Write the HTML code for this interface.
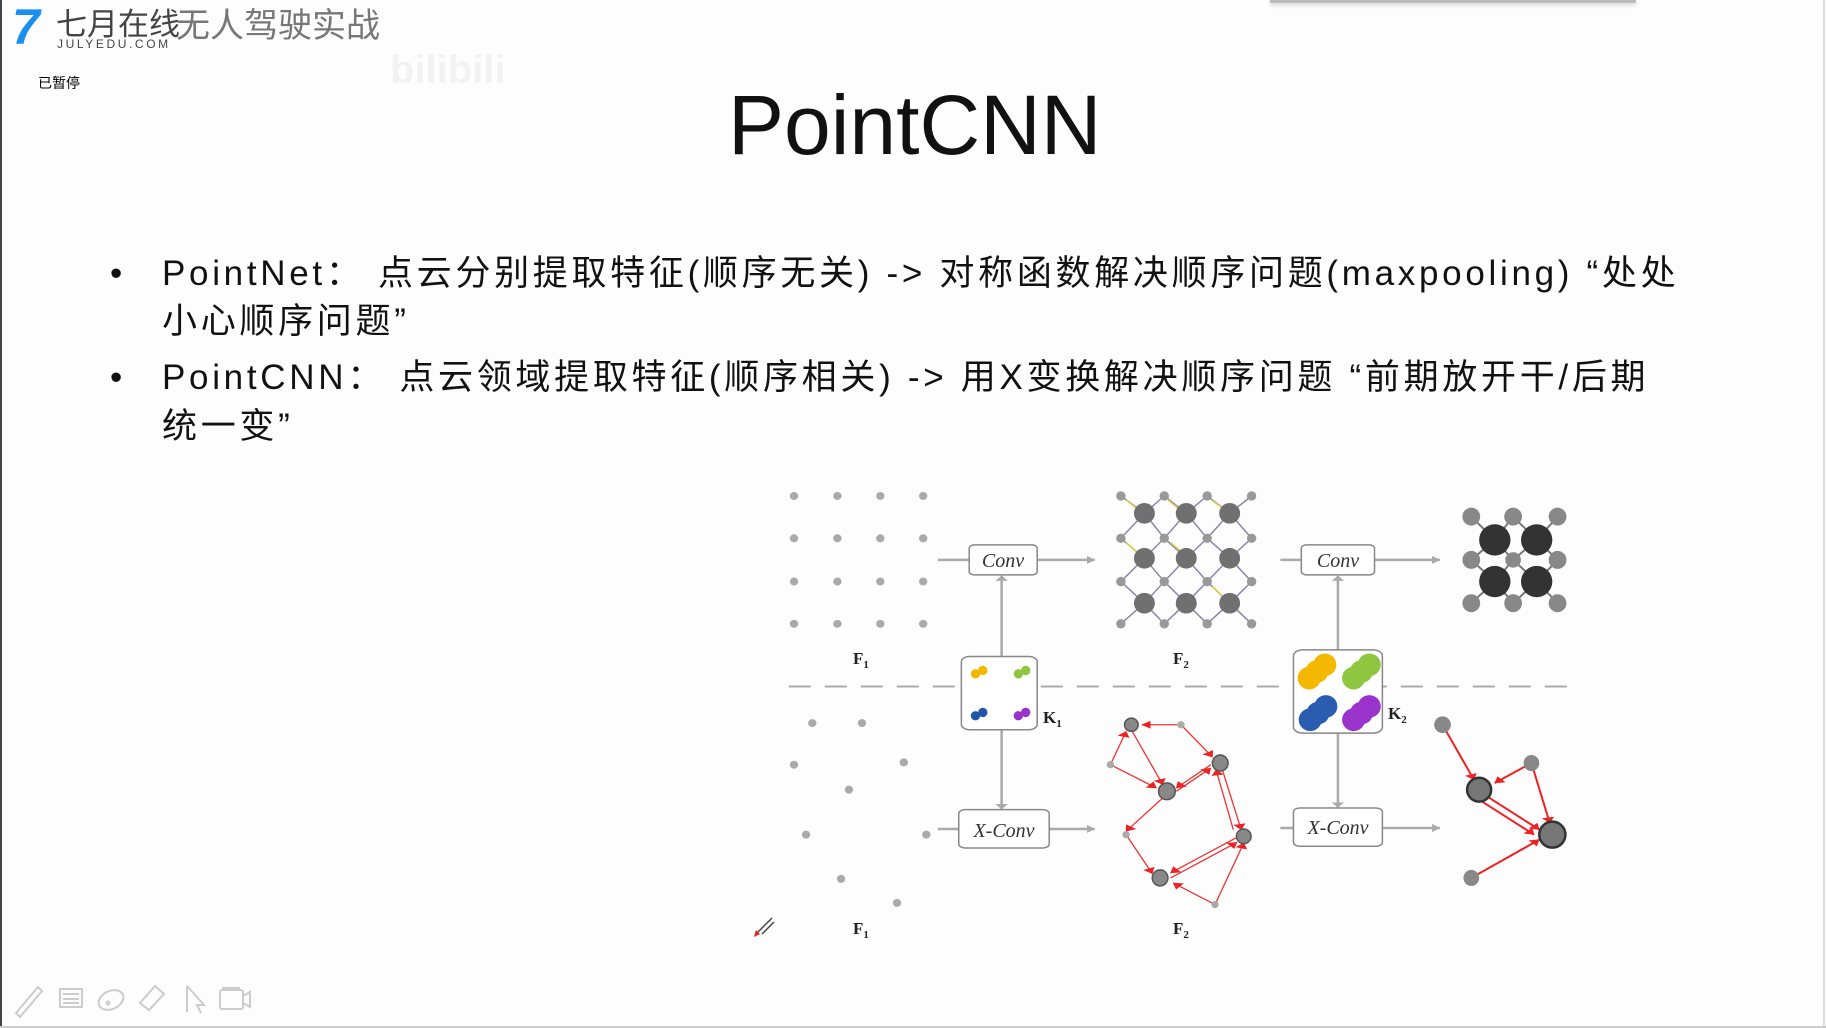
<!DOCTYPE html>
<html><head><meta charset="utf-8"><style>
html,body{margin:0;padding:0}
body{width:1826px;height:1028px;background:#fdfdfd;position:relative;overflow:hidden;font-family:"Liberation Sans","Noto Sans CJK SC",sans-serif;}
.abs{position:absolute;white-space:nowrap}
.line{font-size:35px;color:#111;line-height:40px;letter-spacing:3.7px}
</style></head><body>
<div class="abs" style="left:0;top:0;width:2px;height:1028px;background:#444"></div>
<div class="abs" style="left:1823px;top:0;width:2px;height:1028px;background:#ddd"></div>
<div class="abs" style="left:0;top:1026px;width:1826px;height:2px;background:#ccc"></div>
<div class="abs" style="left:1270px;top:0;width:366px;height:3px;background:#bbb;box-shadow:0 2px 4px #ccc"></div>

<div class="abs" style="left:12px;top:2px;font-size:50px;font-weight:bold;color:#1a8ff0;font-style:italic;line-height:50px">7</div>
<div class="abs" style="left:56px;top:4px;font-size:31px;color:#444;line-height:36px;font-family:'Noto Sans CJK SC',sans-serif">七月在线</div>
<div class="abs" style="left:57px;top:37px;font-size:12px;color:#444;letter-spacing:2.6px;line-height:14px">JULYEDU.COM</div>
<div class="abs" style="left:176px;top:4px;font-size:34px;color:#777;line-height:38px;font-family:'Noto Sans CJK SC',sans-serif">无人驾驶实战</div>
<div class="abs" style="left:38px;top:74px;font-size:14px;color:#000;background:#fff;line-height:18px;font-family:'Noto Sans CJK SC',sans-serif">已暂停</div>
<div class="abs" style="left:390px;top:48px;font-size:40px;color:#f2f2f2;font-weight:bold">bilibili</div>

<div class="abs" style="left:728px;top:77px;font-size:84px;color:#111;line-height:96px">PointCNN</div>

<div class="abs line" style="left:110px;top:254px">•</div>
<div class="abs line" style="left:162px;top:254px">PointNet： 点云分别提取特征(顺序无关) -&gt; 对称函数解决顺序问题(maxpooling)  “处处</div>
<div class="abs line" style="left:162px;top:302px">小心顺序问题”</div>
<div class="abs line" style="left:110px;top:358px">•</div>
<div class="abs line" style="left:162px;top:358px">PointCNN： 点云领域提取特征(顺序相关) -&gt; 用X变换解决顺序问题 “前期放开干/后期</div>
<div class="abs line" style="left:162px;top:407px">统一变”</div>

<svg class="abs" style="left:0;top:0" width="1826" height="1028">
<defs>
<marker id="ag" markerWidth="16" markerHeight="24" refX="15" refY="12" orient="auto" markerUnits="userSpaceOnUse"><path d="M0,0 L16,12 L0,24z" fill="#aaa"/></marker>
<marker id="ar" markerWidth="18" markerHeight="24" refX="17" refY="12" orient="auto" markerUnits="userSpaceOnUse"><path d="M0,0 L18,12 L0,24z" fill="#e22"/></marker>
</defs>
<g transform="translate(760,470) scale(0.523,0.333)">
<g fill="#aaa">
<ellipse cx="65" cy="78" rx="8" ry="12"/><ellipse cx="148" cy="78" rx="8" ry="12"/><ellipse cx="230" cy="78" rx="8" ry="12"/><ellipse cx="312" cy="78" rx="8" ry="12"/>
<ellipse cx="65" cy="205" rx="8" ry="12"/><ellipse cx="148" cy="205" rx="8" ry="12"/><ellipse cx="230" cy="205" rx="8" ry="12"/><ellipse cx="312" cy="205" rx="8" ry="12"/>
<ellipse cx="65" cy="335" rx="8" ry="12"/><ellipse cx="148" cy="335" rx="8" ry="12"/><ellipse cx="230" cy="335" rx="8" ry="12"/><ellipse cx="312" cy="335" rx="8" ry="12"/>
<ellipse cx="65" cy="462" rx="8" ry="12"/><ellipse cx="148" cy="462" rx="8" ry="12"/><ellipse cx="230" cy="462" rx="8" ry="12"/><ellipse cx="312" cy="462" rx="8" ry="12"/>
</g>
<line x1="55" y1="650" x2="1568" y2="650" stroke="#aaa" stroke-width="2" vector-effect="non-scaling-stroke" stroke-dasharray="22 14"/>
<g stroke="#aaa" stroke-width="2.5" fill="none">
<line x1="340" y1="270" x2="640" y2="270" marker-end="url(#ag)" vector-effect="non-scaling-stroke"/>
<line x1="995" y1="270" x2="1300" y2="270" marker-end="url(#ag)" vector-effect="non-scaling-stroke"/>
<line x1="340" y1="1078" x2="640" y2="1078" marker-end="url(#ag)" vector-effect="non-scaling-stroke"/>
<line x1="995" y1="1075" x2="1300" y2="1075" marker-end="url(#ag)" vector-effect="non-scaling-stroke"/>
<line x1="462" y1="560" x2="462" y2="318" marker-end="url(#ag)" vector-effect="non-scaling-stroke"/>
<line x1="462" y1="780" x2="462" y2="1018" marker-end="url(#ag)" vector-effect="non-scaling-stroke"/>
<line x1="1105" y1="540" x2="1105" y2="318" marker-end="url(#ag)" vector-effect="non-scaling-stroke"/>
<line x1="1105" y1="790" x2="1105" y2="1013" marker-end="url(#ag)" vector-effect="non-scaling-stroke"/>
</g>
<g fill="#fff" stroke="#888" stroke-width="1.5">
<rect x="400" y="225" width="130" height="90" rx="10" vector-effect="non-scaling-stroke"/>
<rect x="1035" y="225" width="140" height="90" rx="10" vector-effect="non-scaling-stroke"/>
<rect x="380" y="1020" width="173" height="115" rx="12" vector-effect="non-scaling-stroke"/>
<rect x="1020" y="1015" width="170" height="115" rx="12" vector-effect="non-scaling-stroke"/>
<rect x="385" y="560" width="145" height="220" rx="16" vector-effect="non-scaling-stroke"/>
<rect x="1020" y="540" width="170" height="250" rx="18" vector-effect="non-scaling-stroke"/>
</g>
<g fill="#f5b800"><ellipse cx="412" cy="612" rx="9" ry="14"/><ellipse cx="426" cy="602" rx="9" ry="14"/></g>
<g fill="#8ec63f"><ellipse cx="494" cy="612" rx="9" ry="14"/><ellipse cx="508" cy="602" rx="9" ry="14"/></g>
<g fill="#2255aa"><ellipse cx="412" cy="738" rx="9" ry="14"/><ellipse cx="426" cy="728" rx="9" ry="14"/></g>
<g fill="#9933cc"><ellipse cx="494" cy="738" rx="9" ry="14"/><ellipse cx="508" cy="728" rx="9" ry="14"/></g>
<g fill="#f5b800"><ellipse cx="1050" cy="625" rx="22" ry="34"/><ellipse cx="1065" cy="605" rx="22" ry="34"/><ellipse cx="1080" cy="585" rx="22" ry="34"/></g>
<g fill="#8ec63f"><ellipse cx="1135" cy="625" rx="22" ry="34"/><ellipse cx="1150" cy="605" rx="22" ry="34"/><ellipse cx="1165" cy="585" rx="22" ry="34"/></g>
<g fill="#2a5db0"><ellipse cx="1052" cy="750" rx="22" ry="34"/><ellipse cx="1067" cy="730" rx="22" ry="34"/><ellipse cx="1082" cy="710" rx="22" ry="34"/></g>
<g fill="#9933cc"><ellipse cx="1135" cy="750" rx="22" ry="34"/><ellipse cx="1150" cy="730" rx="22" ry="34"/><ellipse cx="1165" cy="710" rx="22" ry="34"/></g>
<g stroke="#8888aa" stroke-width="1.5" fill="none">
<path vector-effect="non-scaling-stroke" d="M690,78 L735,130 L773,78 L815,130 L855,78 L898,130 L940,78
M690,205 L735,130 L773,205 L815,130 L855,205 L898,130 L940,205
M690,205 L735,265 L773,205 L815,265 L855,205 L898,265 L940,205
M690,335 L735,265 L773,335 L815,265 L855,335 L898,265 L940,335
M690,335 L735,400 L773,335 L815,400 L855,335 L898,400 L940,335
M690,462 L735,400 L773,462 L815,400 L855,462 L898,400 L940,462"/>
</g>
<g stroke="#d8d040" stroke-width="1.5" fill="none"><path vector-effect="non-scaling-stroke" d="M700,90 L720,115 M780,90 L800,115 M865,92 L885,115 M700,218 L720,245 M785,218 L805,245 M865,350 L885,380"/></g>
<g fill="#999"><ellipse cx="690" cy="78" rx="9" ry="14"/><ellipse cx="773" cy="78" rx="9" ry="14"/><ellipse cx="855" cy="78" rx="9" ry="14"/><ellipse cx="940" cy="78" rx="9" ry="14"/>
<ellipse cx="690" cy="205" rx="9" ry="14"/><ellipse cx="773" cy="205" rx="9" ry="14"/><ellipse cx="855" cy="205" rx="9" ry="14"/><ellipse cx="940" cy="205" rx="9" ry="14"/>
<ellipse cx="690" cy="335" rx="9" ry="14"/><ellipse cx="773" cy="335" rx="9" ry="14"/><ellipse cx="855" cy="335" rx="9" ry="14"/><ellipse cx="940" cy="335" rx="9" ry="14"/>
<ellipse cx="690" cy="462" rx="9" ry="14"/><ellipse cx="773" cy="462" rx="9" ry="14"/><ellipse cx="855" cy="462" rx="9" ry="14"/><ellipse cx="940" cy="462" rx="9" ry="14"/></g>
<g fill="#707070"><ellipse cx="735" cy="130" rx="20" ry="31"/><ellipse cx="815" cy="130" rx="20" ry="31"/><ellipse cx="898" cy="130" rx="20" ry="31"/>
<ellipse cx="735" cy="265" rx="20" ry="31"/><ellipse cx="815" cy="265" rx="20" ry="31"/><ellipse cx="898" cy="265" rx="20" ry="31"/>
<ellipse cx="735" cy="400" rx="20" ry="31"/><ellipse cx="815" cy="400" rx="20" ry="31"/><ellipse cx="898" cy="400" rx="20" ry="31"/></g>
<g stroke="#777" stroke-width="2" fill="none"><path vector-effect="non-scaling-stroke" d="M1360,140 L1405,210 L1440,140 L1485,210 L1525,140 M1360,270 L1405,210 L1440,270 L1485,210 L1525,270 M1360,270 L1405,335 L1440,270 L1485,335 L1525,270 M1360,400 L1405,335 L1440,400 L1485,335 L1525,400"/></g>
<g fill="#888"><ellipse cx="1360" cy="140" rx="17" ry="27"/><ellipse cx="1440" cy="140" rx="17" ry="27"/><ellipse cx="1525" cy="140" rx="17" ry="27"/>
<ellipse cx="1360" cy="270" rx="17" ry="27"/><ellipse cx="1440" cy="270" rx="15" ry="23"/><ellipse cx="1525" cy="270" rx="17" ry="27"/>
<ellipse cx="1360" cy="400" rx="17" ry="27"/><ellipse cx="1440" cy="400" rx="17" ry="27"/><ellipse cx="1525" cy="400" rx="17" ry="27"/></g>
<g fill="#333"><ellipse cx="1405" cy="210" rx="30" ry="47"/><ellipse cx="1485" cy="210" rx="30" ry="47"/><ellipse cx="1405" cy="335" rx="30" ry="47"/><ellipse cx="1485" cy="335" rx="30" ry="47"/></g>
<g fill="#aaa"><ellipse cx="100" cy="760" rx="8" ry="12"/><ellipse cx="195" cy="760" rx="8" ry="12"/><ellipse cx="65" cy="885" rx="8" ry="12"/><ellipse cx="275" cy="878" rx="8" ry="12"/><ellipse cx="170" cy="960" rx="8" ry="12"/><ellipse cx="88" cy="1095" rx="8" ry="12"/><ellipse cx="318" cy="1095" rx="8" ry="12"/><ellipse cx="155" cy="1228" rx="8" ry="12"/><ellipse cx="262" cy="1300" rx="8" ry="12"/></g>
<g stroke="#e33" stroke-width="1.3" fill="none">
<line vector-effect="non-scaling-stroke" x1="805" y1="765" x2="730" y2="765" marker-end="url(#ar)"/>
<line vector-effect="non-scaling-stroke" x1="805" y1="765" x2="865" y2="862" marker-end="url(#ar)"/>
<line vector-effect="non-scaling-stroke" x1="670" y1="885" x2="700" y2="785" marker-end="url(#ar)"/>
<line vector-effect="non-scaling-stroke" x1="670" y1="885" x2="758" y2="955" marker-end="url(#ar)"/>
<line vector-effect="non-scaling-stroke" x1="710" y1="780" x2="770" y2="945" marker-end="url(#ar)"/>
<line vector-effect="non-scaling-stroke" x1="862" y1="885" x2="796" y2="955" marker-end="url(#ar)"/>
<line vector-effect="non-scaling-stroke" x1="796" y1="965" x2="862" y2="895" marker-end="url(#ar)"/>
<line vector-effect="non-scaling-stroke" x1="884" y1="900" x2="920" y2="1080" marker-end="url(#ar)"/>
<line vector-effect="non-scaling-stroke" x1="905" y1="1080" x2="872" y2="900" marker-end="url(#ar)"/>
<line vector-effect="non-scaling-stroke" x1="770" y1="985" x2="700" y2="1085" marker-end="url(#ar)"/>
<line vector-effect="non-scaling-stroke" x1="700" y1="1095" x2="750" y2="1212" marker-end="url(#ar)"/>
<line vector-effect="non-scaling-stroke" x1="910" y1="1105" x2="785" y2="1210" marker-end="url(#ar)"/>
<line vector-effect="non-scaling-stroke" x1="785" y1="1225" x2="912" y2="1118" marker-end="url(#ar)"/>
<line vector-effect="non-scaling-stroke" x1="870" y1="1305" x2="790" y2="1240" marker-end="url(#ar)"/>
<line vector-effect="non-scaling-stroke" x1="870" y1="1305" x2="925" y2="1120" marker-end="url(#ar)"/>
</g>
<g fill="#888" stroke="#555" stroke-width="1.5"><ellipse vector-effect="non-scaling-stroke" cx="710" cy="765" rx="13" ry="20"/><ellipse vector-effect="non-scaling-stroke" cx="880" cy="880" rx="15" ry="24"/><ellipse vector-effect="non-scaling-stroke" cx="778" cy="965" rx="16" ry="25"/><ellipse vector-effect="non-scaling-stroke" cx="925" cy="1100" rx="14" ry="22"/><ellipse vector-effect="non-scaling-stroke" cx="765" cy="1225" rx="15" ry="24"/></g>
<g fill="#aaa"><ellipse cx="805" cy="765" rx="7" ry="11"/><ellipse cx="670" cy="885" rx="7" ry="11"/><ellipse cx="700" cy="1095" rx="7" ry="11"/><ellipse cx="870" cy="1305" rx="7" ry="11"/></g>
<g stroke="#e22" stroke-width="2" fill="none">
<line vector-effect="non-scaling-stroke" x1="1305" y1="765" x2="1365" y2="930" marker-end="url(#ar)"/>
<line vector-effect="non-scaling-stroke" x1="1475" y1="880" x2="1405" y2="940" marker-end="url(#ar)"/>
<line vector-effect="non-scaling-stroke" x1="1475" y1="880" x2="1510" y2="1060" marker-end="url(#ar)"/>
<line vector-effect="non-scaling-stroke" x1="1385" y1="975" x2="1490" y2="1080" marker-end="url(#ar)"/>
<line vector-effect="non-scaling-stroke" x1="1375" y1="990" x2="1480" y2="1095" marker-end="url(#ar)"/>
<line vector-effect="non-scaling-stroke" x1="1360" y1="1225" x2="1490" y2="1110" marker-end="url(#ar)"/>
</g>
<g fill="#777" stroke="#333" stroke-width="2.5"><ellipse vector-effect="non-scaling-stroke" cx="1375" cy="960" rx="23" ry="36"/><ellipse vector-effect="non-scaling-stroke" cx="1515" cy="1095" rx="25" ry="39"/></g>
<g fill="#888"><ellipse cx="1305" cy="765" rx="16" ry="25"/><ellipse cx="1475" cy="880" rx="15" ry="24"/><ellipse cx="1360" cy="1225" rx="15" ry="24"/></g>
</g>
<g font-family="Liberation Serif" font-style="italic" font-size="20" fill="#333" text-anchor="middle">
<text x="1003" y="567">Conv</text><text x="1338" y="567">Conv</text>
<text x="1004" y="837">X-Conv</text><text x="1338" y="834">X-Conv</text>
</g>
<g font-family="Liberation Serif" font-weight="bold" font-size="17" fill="#222">
<text x="853" y="664">F<tspan font-size="11" dy="4">1</tspan></text>
<text x="1173" y="664">F<tspan font-size="11" dy="4">2</tspan></text>
<text x="853" y="934">F<tspan font-size="11" dy="4">1</tspan></text>
<text x="1173" y="934">F<tspan font-size="11" dy="4">2</tspan></text>
<text x="1043" y="723">K<tspan font-size="11" dy="4">1</tspan></text>
<text x="1388" y="719">K<tspan font-size="11" dy="4">2</tspan></text>
</g>
<path d="M758,932 L772,918 M762,934 L774,922" stroke="#444" stroke-width="1.5"/><path d="M756,930 L760,934 L754,937z" fill="#d22"/>
<g stroke="#ccc" stroke-width="2" fill="none">
<path d="M16,1013 L38,987 L42,991 L20,1017 Z"/>
<rect x="60" y="989" width="22" height="18"/><path d="M63,994 H79 M63,999 H79 M63,1003 H79"/>
<ellipse cx="111" cy="1000" rx="13" ry="9" transform="rotate(-25 111 1000)"/><circle cx="108" cy="1003" r="1.5"/>
<path d="M140,1003 L155,986 L164,994 L149,1010 Z"/>
<path d="M187,986 V1012 M187,986 L204,1005 L197,1005 L201,1013"/>
<rect x="220" y="990" width="23" height="19" rx="2"/><path d="M243,996 L250,992 V1007 L243,1003"/><path d="M222,988 H240"/>
</g>
</svg>
</body></html>
